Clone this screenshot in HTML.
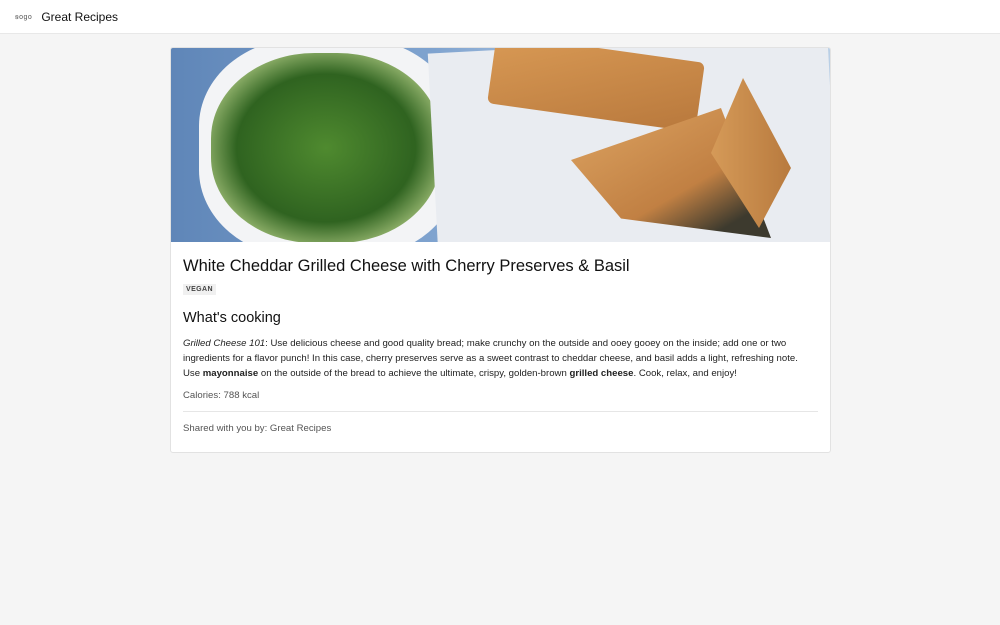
<!DOCTYPE html>
<html><head><meta charset="utf-8"><style>
*{box-sizing:border-box;margin:0;padding:0}
body{width:1000px;height:625px;background:#f5f5f5;font-family:"Liberation Sans",Arial,sans-serif;color:#111;overflow:hidden}
.hdr{height:34px;background:#fff;border-bottom:1px solid #e8e8e8;display:flex;align-items:center;padding-left:15px}
.logo{font-size:7px;color:#555;letter-spacing:0.5px;margin-right:9px}
.title{font-size:12px;color:#111}
.card{position:absolute;left:170px;top:47px;width:661px;height:406px;background:#fff;border:1px solid #e2e2e2;border-radius:3px;overflow:hidden}
.img{position:relative;height:194px;background:linear-gradient(90deg,#5f86b8,#7fa3cf 40%,#a9c3e0 60%,#b9cfe6);overflow:hidden}
.body{padding:0 12px}
h1{font-size:16.5px;font-weight:normal;margin-top:13px;line-height:22px}
.tag{display:inline-block;background:#f0f0f0;font-size:7px;font-weight:bold;color:#444;padding:2px 3px;margin-top:7px;letter-spacing:.4px}
h2{font-size:14.5px;font-weight:normal;margin-top:14px}
p{font-size:9.6px;line-height:15px;margin-top:10px;color:#222;padding-right:20px}
.cal{font-size:9.6px;color:#555;margin-top:9px;padding-bottom:10px;border-bottom:1px solid #e6e6e6}
.sh{font-size:9.6px;color:#555;margin-top:11px}
</style></head><body>
<div class="hdr"><span class="logo">ꞩogo</span><span class="title">Great Recipes</span></div>
<div class="card">
<div class="img">
<div style="position:absolute;left:28px;top:-10px;width:260px;height:220px;background:#f3f4f6;border-radius:40%"></div>
<div style="position:absolute;left:40px;top:5px;width:230px;height:190px;background:radial-gradient(ellipse at 50% 50%,#4f8a2f,#2f6320 55%,#8fb06a 75%,#f0f0f0 78%);border-radius:45%"></div>
<div style="position:absolute;left:262px;top:-5px;width:400px;height:210px;background:#e9ecf1;transform:rotate(-3deg)"></div>
<div style="position:absolute;left:320px;top:0;width:210px;height:70px;background:linear-gradient(160deg,#d99a55,#b8783c);transform:rotate(8deg);border-radius:6px"></div>
<div style="position:absolute;left:400px;top:60px;width:200px;height:130px;background:linear-gradient(150deg,#dda462,#c18043 60%,#3d3a2e 85%);clip-path:polygon(0 40%,75% 0,100% 100%,25% 85%)"></div>
<div style="position:absolute;left:540px;top:30px;width:80px;height:150px;background:linear-gradient(90deg,#d59a58,#b87a3e);clip-path:polygon(40% 0,100% 60%,60% 100%,0 50%)"></div>
</div>
<div class="body">
<h1>White Cheddar Grilled Cheese with Cherry Preserves &amp; Basil</h1>
<span class="tag">VEGAN</span>
<h2>What's cooking</h2>
<p><i>Grilled Cheese 101</i>: Use delicious cheese and good quality bread; make crunchy on the outside and ooey gooey on the inside; add one or two ingredients for a flavor punch! In this case, cherry preserves serve as a sweet contrast to cheddar cheese, and basil adds a light, refreshing note. Use <b>mayonnaise</b> on the outside of the bread to achieve the ultimate, crispy, golden-brown <b>grilled cheese</b>. Cook, relax, and enjoy!</p>
<div class="cal">Calories: 788 kcal</div>
<div class="sh">Shared with you by: Great Recipes</div>
</div>
</div>
</body></html>
